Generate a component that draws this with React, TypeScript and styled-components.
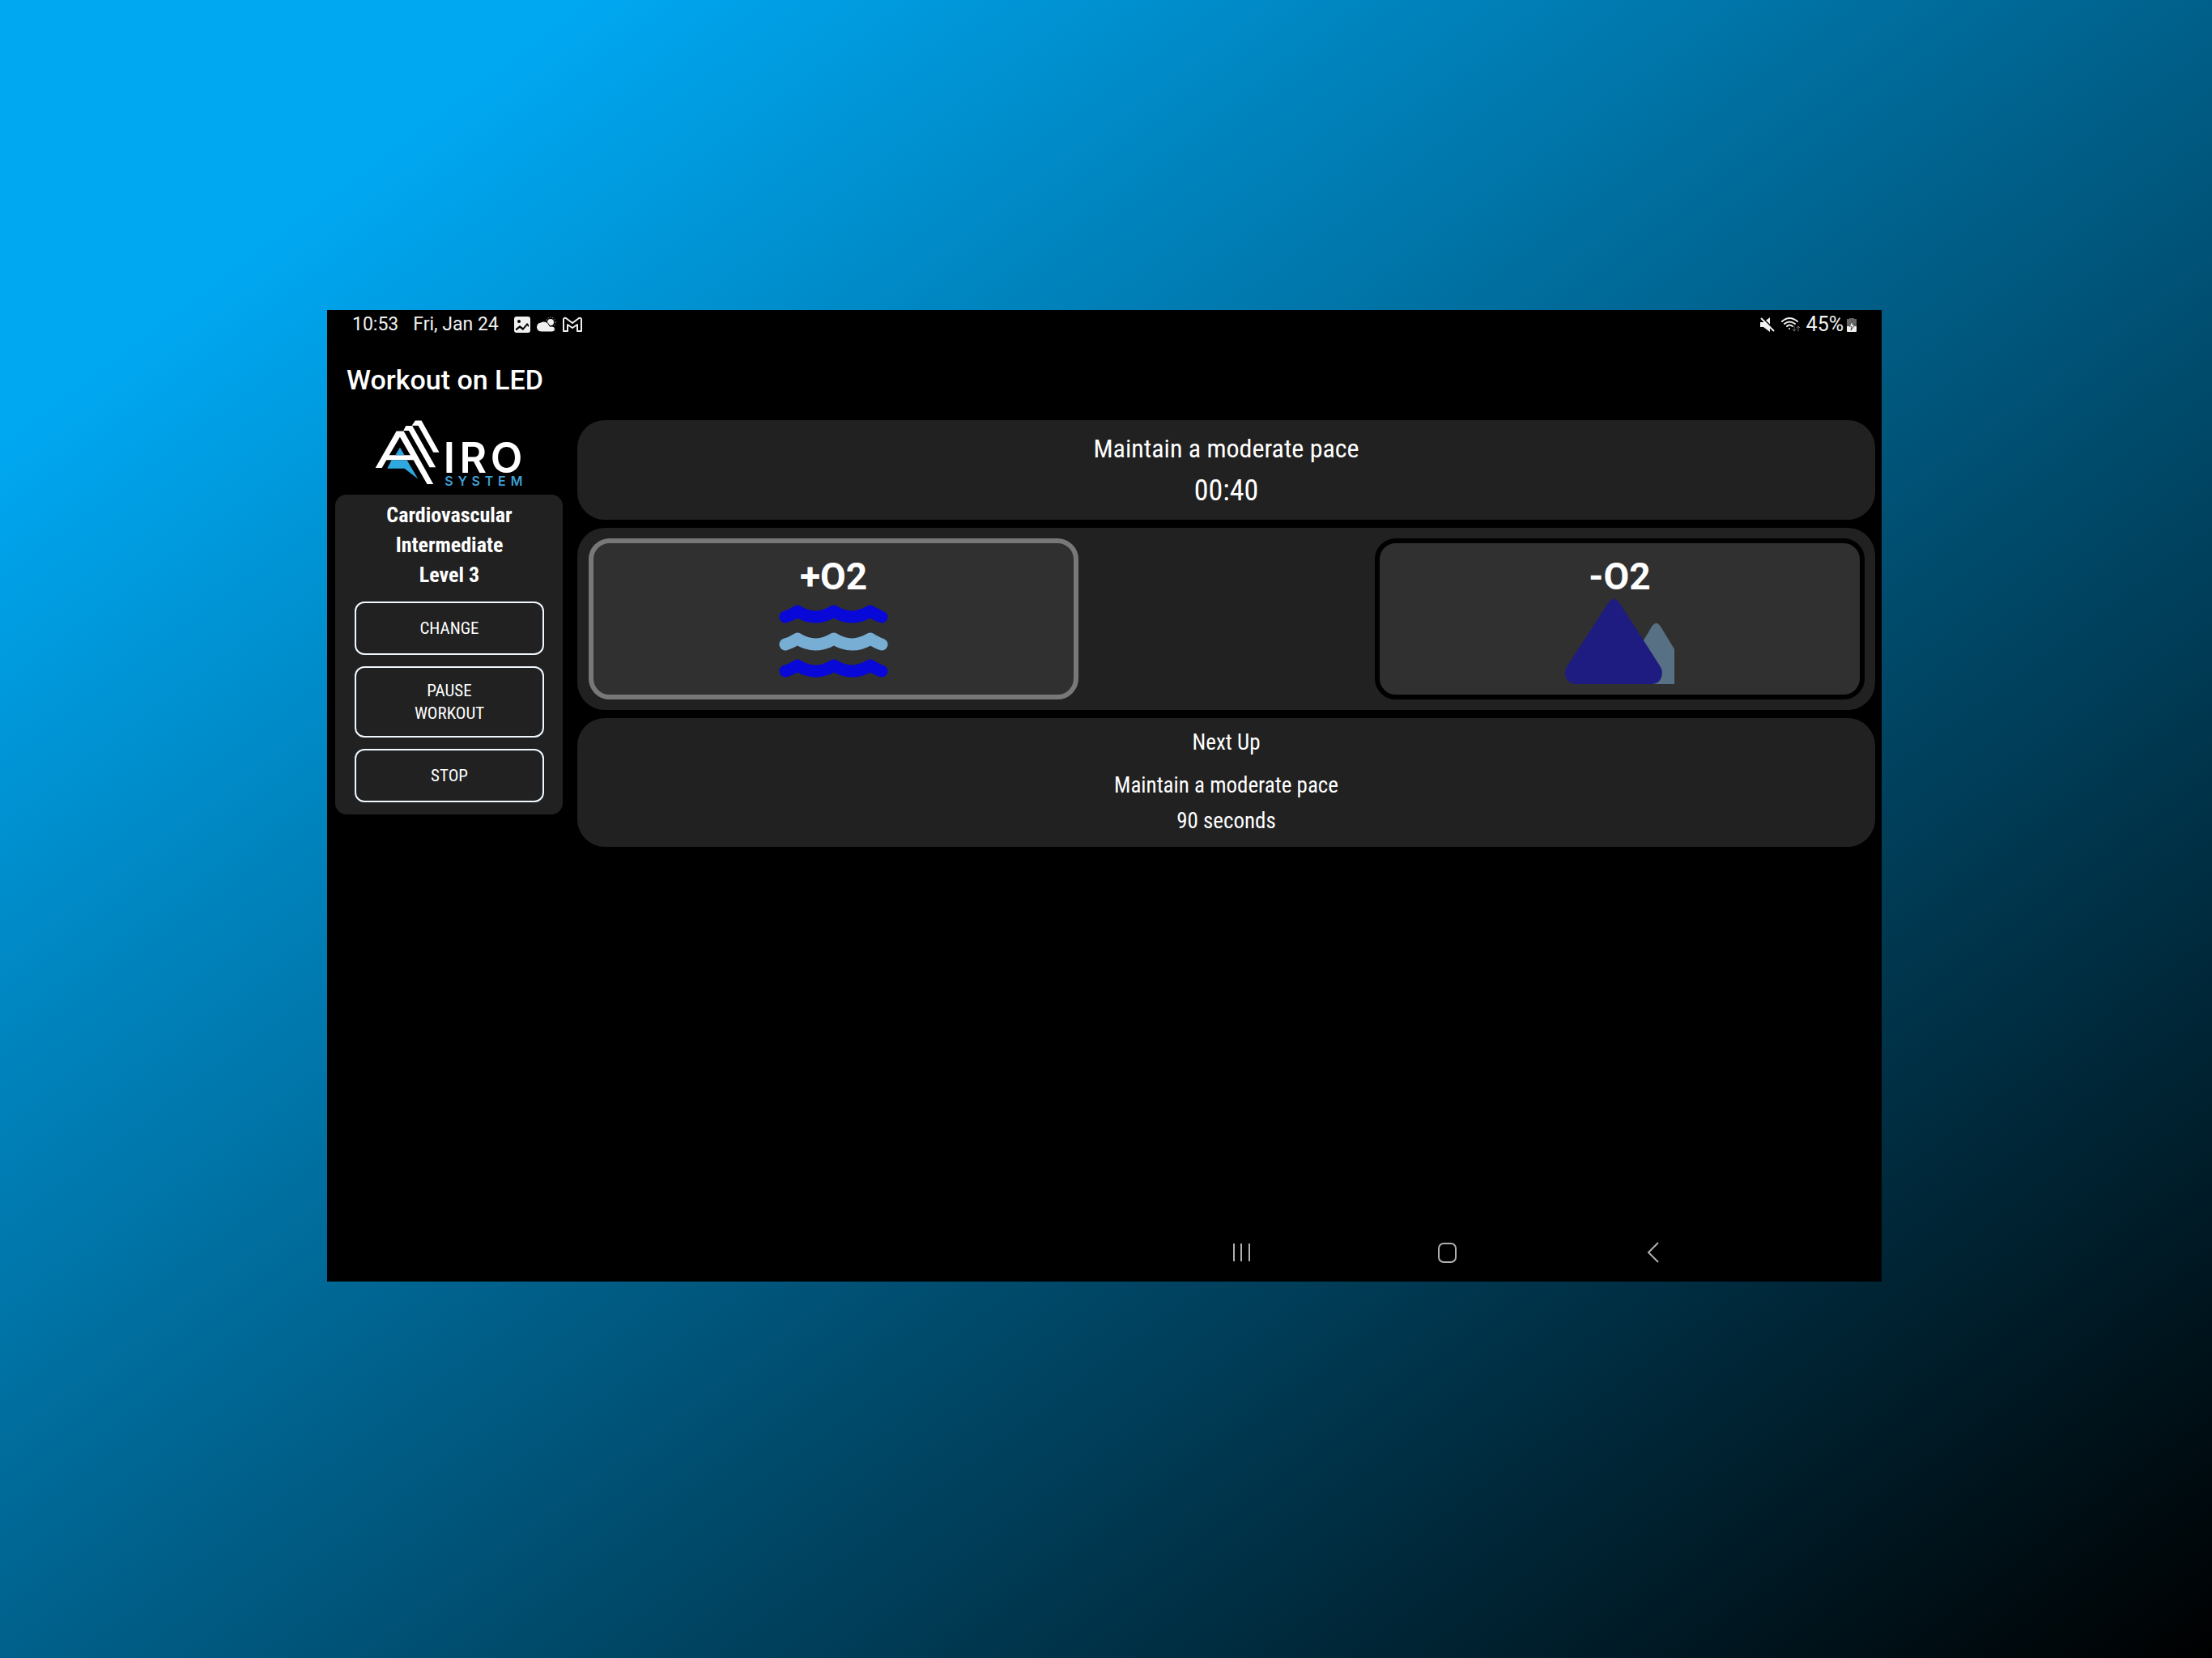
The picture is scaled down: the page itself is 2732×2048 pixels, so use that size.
import React from "react";
import styled, { createGlobalStyle } from "styled-components";

const condensed = `"Roboto Condensed", "Open Sans Condensed", Roboto, sans-serif`;
const regular = `Roboto, "Noto Sans", sans-serif`;

const GlobalStyle = createGlobalStyle`
  *, *::before, *::after { box-sizing: border-box; }
  body { margin: 0; background: #000; }
  p { margin: 0; }
  button { margin: 0; font: inherit; color: inherit; cursor: pointer; }
  svg { display: block; flex: none; }
`;

const Backdrop = styled.div`
  display: flex;
  min-height: 100vh;
  padding: 383px 408px 465px 404px;
  background: linear-gradient(143deg, #00a8f2 13%, #000 100%);
`;

const Screen = styled.div`
  flex: 1;
  min-width: 0;
  display: flex;
  flex-direction: column;
  background: #000;
  color: #fff;
  font-family: ${regular};
`;

const StatusBar = styled.header`
  display: flex;
  justify-content: space-between;
  align-items: center;
  height: 36px;
  padding: 0 31px;
  font-size: 23px;
  line-height: 28px;
  color: #f0f0f0;
`;

const StatusGroup = styled.div<{ $gap: number }>`
  display: flex;
  align-items: center;
  gap: ${(p) => p.$gap}px;
`;

const BatteryLevel = styled.span`
  font-size: 25px;
`;

const AppBar = styled.div`
  display: flex;
  align-items: center;
  height: 100px;
  padding: 0 24px;
`;

const Title = styled.h1`
  margin: 0;
  font-size: 34px;
  font-weight: 500;
  line-height: 40px;
`;

const Body = styled.div`
  flex: 1;
  display: flex;
  align-items: flex-start;
  gap: 18px;
  padding: 0 8px 0 10px;
`;

const Sidebar = styled.aside`
  flex: 0 0 281px;
  display: flex;
  flex-direction: column;
  align-items: center;
`;

const ProgramCard = styled.section`
  width: 100%;
  display: flex;
  flex-direction: column;
  gap: 14px;
  padding: 7px 23px 15px 24px;
  border-radius: 14px;
  background: #212121;
  font-family: ${condensed};
`;

const ProgramName = styled.h2`
  margin: 0;
  font-size: 26px;
  font-weight: 700;
  line-height: 37px;
  text-align: center;
`;

const OutlineButton = styled.button`
  min-height: 66px;
  padding: 14px 50px;
  border: 2px solid #f0f8ff;
  border-radius: 12px;
  background: transparent;
  font-size: 21px;
  line-height: 28px;
  text-transform: uppercase;
`;

const Main = styled.main`
  flex: 1;
  min-width: 0;
  display: flex;
  flex-direction: column;
  gap: 10px;
  font-family: ${condensed};
  text-align: center;
`;

const Panel = styled.section`
  border-radius: 34px;
  background: #212121;
`;

const CurrentPanel = styled(Panel)`
  padding: 9px 0 10px;
  font-size: 32px;
  line-height: 52px;
`;

const Countdown = styled.p`
  font-size: 36px;
`;

const OxygenPanel = styled(Panel)`
  display: flex;
  justify-content: space-between;
  padding: 13px 13px 13px 14px;
`;

const NextPanel = styled(Panel)`
  padding: 8px 0 10px;
  font-size: 27px;
  line-height: 44px;
`;

const NextHeading = styled.h2`
  margin: 0 0 9px;
  font-size: 27px;
  font-weight: 400;
`;

const OxygenTile = styled.button<{ $active?: boolean }>`
  width: 38.4%;
  display: flex;
  flex-direction: column;
  align-items: center;
  padding: 14px 0 13px;
  border: 6px solid ${(p) => (p.$active ? "#787878" : "#000")};
  border-radius: 26px;
  background: #303030;
`;

const OxygenLabel = styled.span`
  font-family: ${regular};
  font-size: 46px;
  font-weight: 700;
  line-height: 55px;
`;

const NavBar = styled.nav`
  display: flex;
  justify-content: flex-end;
  gap: 190px;
  height: 72px;
  padding-right: 250px;
`;

const NavButton = styled.button`
  display: flex;
  align-items: center;
  justify-content: center;
  width: 64px;
  padding: 0;
  border: 0;
  background: transparent;
`;

function Logo() {
  return (
    <svg width="183" height="92" viewBox="190 432 550 276" role="img" aria-label="AIRO System">
      <path fill="#fff" fillRule="evenodd" d="M192 609 270 472H297L407 669H384L333 580H233L216 609ZM283 494 243 562H322Z" />
      <path fill="#fff" d="M296 471 305 453H329L416 607H393L316 471ZM327 452 340 433H363L429 551H407L351 452Z" />
      <path fill="#2fa8e0" d="M283 533 300 562H266ZM252 580H309L350 650 300 611H236Z" />
      <g fontFamily="Inter, sans-serif">
        <text x="445 504 619" y="626" fontSize="155" fontWeight="600" fill="#fff">IRO</text>
        <text x="449 498 549 598 647 694" y="675" fontSize="48" fontWeight="600" fill="#3f9fd0">SYSTEM</text>
      </g>
    </svg>
  );
}

function PictureIcon() {
  return (
    <svg width="22" height="22" viewBox="0 0 22 22" aria-hidden="true">
      <rect x="1" y="1" width="20" height="20" rx="3" fill="#f0f0f0" />
      <circle cx="7" cy="7" r="2" fill="#000" />
      <path d="M3 18V16L8 12 12 15 17 9 19 11V14L17 12 12 18 8 15 4 18Z" fill="#000" />
    </svg>
  );
}

function CloudIcon() {
  return (
    <svg width="24" height="22" viewBox="0 0 24 22" aria-hidden="true">
      <circle cx="17" cy="8" r="4" fill="#f0f0f0" />
      <circle cx="17" cy="8" r="6" fill="none" stroke="#f0f0f0" strokeWidth="1" strokeDasharray="1 2" />
      <path d="M6 20a5 5 0 0 1-1-12A7 7 0 0 1 15 11l1 2h3a3 3 0 0 1 0 7z" fill="#f0f0f0" stroke="#000" strokeWidth="1" />
    </svg>
  );
}

function MailIcon() {
  return (
    <svg width="26" height="22" viewBox="0 0 26 22" aria-hidden="true">
      <path
        d="M2 19V5Q2 2 5 3L13 9 21 3Q24 2 24 5V19H19V11L13 15 7 11V19Z"
        fill="none"
        stroke="#f0f0f0"
        strokeWidth="2"
        strokeLinejoin="round"
      />
    </svg>
  );
}

function MuteIcon() {
  return (
    <svg width="20" height="20" viewBox="0 0 20 20" aria-hidden="true">
      <path d="M1 7h4l8-6v18l-8-6H1z" fill="#f0f0f0" />
      <path d="M3 1 19 17" stroke="#000" strokeWidth="2" />
      <path d="M2 2 18 18" stroke="#f0f0f0" strokeWidth="2" />
    </svg>
  );
}

function WifiIcon() {
  return (
    <svg width="24" height="20" viewBox="0 0 24 20" aria-hidden="true" fill="none" strokeLinecap="round">
      <path d="M1 6Q10-2 20 6M4 9Q10 4 17 9M7 12Q10 9 14 12" stroke="#f0f0f0" strokeWidth="2" />
      <circle cx="10" cy="15" r="1" fill="#f0f0f0" />
      <path d="M16 12v6m-2-2 2 2 2-2M21 18v-6m-2 2 2-2 2 2" stroke="#707070" strokeWidth="1" />
    </svg>
  );
}

function BatteryIcon() {
  return (
    <svg width="12" height="19" viewBox="0 0 12 19" aria-hidden="true">
      <path d="M3 1h6v1h3v9H0V2h3z" fill="#666" />
      <path d="M0 11h12v6q0 1-1 1H1q-1 0-1-1z" fill="#f0f0f0" />
      <path d="M7 4 3 11h3l-1 5 5-7H7z" fill="#fff" stroke="#444" strokeWidth="1" />
    </svg>
  );
}

const waveRows = [
  { offset: 0, color: "#0808d8" },
  { offset: 34, color: "#78aed3" },
  { offset: 67, color: "#0808d8" },
];

function WavesIcon() {
  return (
    <svg width="135" height="105" viewBox="0 0 135 105" aria-hidden="true">
      {waveRows.map((row) => (
        <path
          key={row.offset}
          transform={`translate(0 ${row.offset})`}
          d="M8 22Q15 20 23 15Q45 29 68 15Q90 29 113 15Q121 20 127 22"
          fill="none"
          stroke={row.color}
          strokeWidth="15"
          strokeLinecap="round"
          strokeLinejoin="round"
        />
      ))}
    </svg>
  );
}

function MountainIcon() {
  return (
    <svg width="135" height="105" viewBox="27 163 405 315" aria-hidden="true">
      <path d="M340 478H432V348L379 262Q365 243 350 262L300 345Z" fill="#577083" />
      <path d="M187 177Q207 149 229 177L381 415C395 440 382 478 350 478H65C32 478 18 440 33 415Z" fill="#1e1c80" />
    </svg>
  );
}

export default function App() {
  return (
    <Backdrop>
      <GlobalStyle />
      <Screen>
        <StatusBar>
          <StatusGroup $gap={18}>
            <time>10:53</time>
            <span>Fri, Jan 24</span>
            <StatusGroup $gap={7}>
              <PictureIcon />
              <CloudIcon />
              <MailIcon />
            </StatusGroup>
          </StatusGroup>
          <StatusGroup $gap={7}>
            <MuteIcon />
            <WifiIcon />
            <StatusGroup $gap={4}>
              <BatteryLevel>45%</BatteryLevel>
              <BatteryIcon />
            </StatusGroup>
          </StatusGroup>
        </StatusBar>
        <AppBar>
          <Title>Workout on LED</Title>
        </AppBar>
        <Body>
          <Sidebar>
            <Logo />
            <ProgramCard>
              <ProgramName>
                Cardiovascular
                <br />
                Intermediate
                <br />
                Level 3
              </ProgramName>
              <OutlineButton type="button">Change</OutlineButton>
              <OutlineButton type="button">Pause Workout</OutlineButton>
              <OutlineButton type="button">Stop</OutlineButton>
            </ProgramCard>
          </Sidebar>
          <Main>
            <CurrentPanel>
              <p>Maintain a moderate pace</p>
              <Countdown>00:40</Countdown>
            </CurrentPanel>
            <OxygenPanel>
              <OxygenTile type="button" $active>
                <OxygenLabel>+O2</OxygenLabel>
                <WavesIcon />
              </OxygenTile>
              <OxygenTile type="button">
                <OxygenLabel>-O2</OxygenLabel>
                <MountainIcon />
              </OxygenTile>
            </OxygenPanel>
            <NextPanel>
              <NextHeading>Next Up</NextHeading>
              <p>Maintain a moderate pace</p>
              <p>90 seconds</p>
            </NextPanel>
          </Main>
        </Body>
        <NavBar>
          <NavButton type="button" aria-label="Recent apps">
            <svg width="26" height="26" viewBox="0 0 26 26" stroke="#b0b0b0" strokeWidth="2">
              <path d="M3 2V24M12 2V24M22 2V24" />
            </svg>
          </NavButton>
          <NavButton type="button" aria-label="Home">
            <svg width="26" height="28" viewBox="0 0 26 28" fill="none" stroke="#b0b0b0" strokeWidth="2">
              <rect x="2" y="3" width="21" height="23" rx="6" />
            </svg>
          </NavButton>
          <NavButton type="button" aria-label="Back">
            <svg width="26" height="28" viewBox="0 0 26 28" fill="none" stroke="#b0b0b0" strokeWidth="2">
              <path d="M19 2 7 14 19 26" />
            </svg>
          </NavButton>
        </NavBar>
      </Screen>
    </Backdrop>
  );
}
